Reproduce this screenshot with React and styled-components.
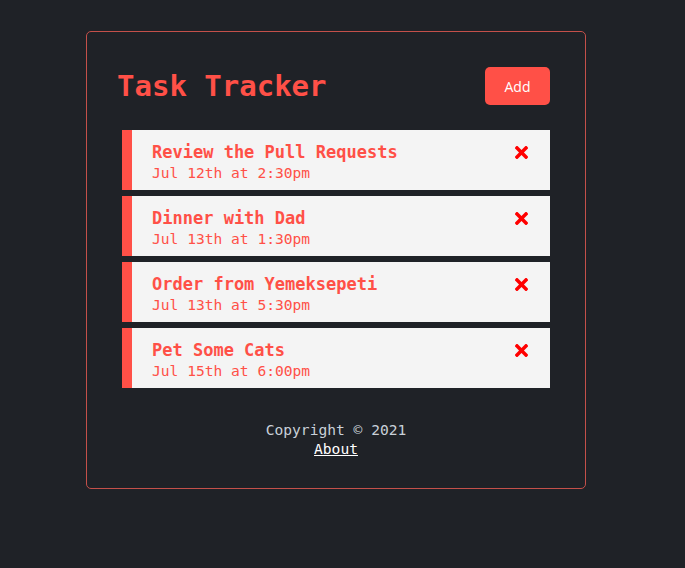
import React, { useState } from "react";
import styled, { createGlobalStyle } from "styled-components";
import { FaTimes } from "react-icons/fa";

const GlobalStyle = createGlobalStyle`
  * {
    box-sizing: border-box;
  }
  body {
    margin: 0;
    background: #1f2227;
    font-family: "DejaVu Sans Mono", "Liberation Mono", monospace;
  }
`;

const Page = styled.div`
  padding: 31px 13px 0 0;
`;

const Container = styled.div`
  width: 500px;
  margin: 0 auto;
  padding: 30px;
  border: 1px solid #c4504a;
  border-radius: 5px;
`;

const Header = styled.header`
  display: flex;
  justify-content: space-between;
  align-items: center;
  margin-bottom: 20px;
`;

const Title = styled.h1`
  margin: 0;
  font-size: 29px;
  font-weight: bold;
  color: #ff5047;
`;

const Button = styled.button`
  margin: 5px;
  width: 65px;
  height: 38px;
  border: none;
  border-radius: 5px;
  background: #ff5047;
  color: #fff;
  font-family: "Open Sans", "Noto Sans", sans-serif;
  font-size: 14px;
  cursor: pointer;
`;

const TaskItem = styled.div`
  margin: 5px;
  padding: 12px 20px 8px;
  height: 60px;
  background: #f4f4f4;
  border-left: 10px solid #ff5047;
  & + & {
    margin-top: 6px;
  }
`;

const TaskText = styled.h3`
  margin: 0;
  display: flex;
  justify-content: space-between;
  align-items: center;
  font-size: 17px;
  line-height: 21px;
  font-weight: bold;
  color: #ff5047;

  svg {
    color: #ff0000;
    font-size: 19px;
    margin-right: -1px;
    cursor: pointer;
  }
`;

const TaskDay = styled.p`
  margin: 0;
  font-size: 14.6px;
  line-height: 19px;
  color: #ff5047;
`;

const Footer = styled.footer`
  margin-top: 32px;
  text-align: center;
  font-size: 14.6px;
  line-height: 19px;
  color: #c9d1d9;

  p {
    margin: 0;
  }
  a {
    color: #fff;
  }
`;

const initialTasks = [
  { id: 1, text: "Review the Pull Requests", day: "Jul 12th at 2:30pm" },
  { id: 2, text: "Dinner with Dad", day: "Jul 13th at 1:30pm" },
  { id: 3, text: "Order from Yemeksepeti", day: "Jul 13th at 5:30pm" },
  { id: 4, text: "Pet Some Cats", day: "Jul 15th at 6:00pm" },
];

const App = () => {
  const [tasks, setTasks] = useState(initialTasks);

  const deleteTask = (id) => {
    setTasks(tasks.filter((task) => task.id !== id));
  };

  return (
    <>
      <GlobalStyle />
      <Page>
        <Container>
          <Header>
            <Title>Task Tracker</Title>
            <Button>Add</Button>
          </Header>
          {tasks.map((task) => (
            <TaskItem key={task.id}>
              <TaskText>
                {task.text}
                <FaTimes onClick={() => deleteTask(task.id)} />
              </TaskText>
              <TaskDay>{task.day}</TaskDay>
            </TaskItem>
          ))}
          <Footer>
            <p>Copyright &copy; 2021</p>
            <a href="#about">About</a>
          </Footer>
        </Container>
      </Page>
    </>
  );
};

export default App;
